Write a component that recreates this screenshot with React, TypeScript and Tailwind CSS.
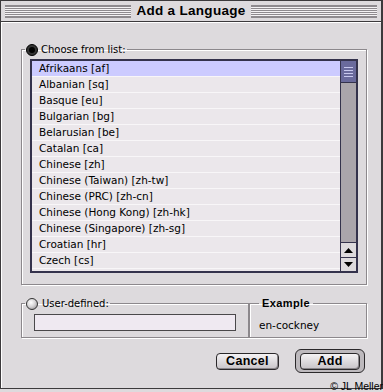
import React from 'react';

const languages = [
    'Afrikaans [af]',
    'Albanian [sq]',
    'Basque [eu]',
    'Bulgarian [bg]',
    'Belarusian [be]',
    'Catalan [ca]',
    'Chinese [zh]',
    'Chinese (Taiwan) [zh-tw]',
    'Chinese (PRC) [zh-cn]',
    'Chinese (Hong Kong) [zh-hk]',
    'Chinese (Singapore) [zh-sg]',
    'Croatian [hr]',
    'Czech [cs]',
];

const Stripes: React.FC = () => (
    <div className="flex-1 h-[13px] bg-[repeating-linear-gradient(to_bottom,#8e8a8e_0px,#8e8a8e_1px,#f4f2f4_1px,#f4f2f4_2px)] border-y border-[#8e8a8e]" />
);

const Radio: React.FC<{ checked: boolean }> = ({ checked }) =>
    checked ? (
        <span className="w-[12px] h-[12px] rounded-full bg-[#333] border border-black flex items-center justify-center">
            <span className="w-[6px] h-[6px] rounded-full bg-black" />
        </span>
    ) : (
        <span className="w-[12px] h-[12px] rounded-full border border-[#333] bg-[radial-gradient(circle_at_40%_35%,#ffffff_0%,#d8d6d8_45%,#8a868a_100%)]" />
    );

const App: React.FC = () => {
    return (
        <div className="relative w-[383px] h-[392px] bg-[#dddadd] font-['DejaVu_Sans',sans-serif] text-black">
            <div className="w-[383px] h-[389px] border border-[#3c3a3c] border-r-2 flex flex-col">
                {/* title bar */}
                <div className="h-[21px] flex items-center gap-[5px] px-[4px] bg-[#dddadd] border-b border-[#3c3a3c]">
                    <Stripes />
                    <span className="text-[13.5px] font-bold leading-none font-['Liberation_Sans',sans-serif] tracking-[0.3px]">Add a Language</span>
                    <Stripes />
                </div>

                <div className="flex-1 border-t border-white border-l bg-[#dddadd] pl-[19px] pt-[20px]">
                    {/* list group */}
                    <fieldset className="w-[346px] h-[242px] border border-[#8c888c] shadow-[inset_1px_1px_0_#fff,1px_1px_0_#fff] pt-[3px]">
                        <legend className="ml-[3px] px-[1px] flex items-center gap-[3px]">
                            <Radio checked />
                            <span className="text-[10px] leading-[13px]">Choose from list:</span>
                        </legend>
                        <div className="ml-[8px] w-[328px] h-[214px] border-2 border-[#34324c] flex bg-[#ebe7eb]">
                            <div className="flex-1 flex flex-col">
                                {languages.map((lang, i) => (
                                    <div
                                        key={lang}
                                        className={`h-[16px] flex items-center pl-[7px] text-[10.5px] border-b border-[#f8f6f8] ${i === 0 ? 'bg-[#cccbff]' : 'bg-[#ebe7eb]'}`}
                                    >
                                        {lang}
                                    </div>
                                ))}
                            </div>
                            {/* scrollbar */}
                            <div className="w-[16px] flex flex-col border-l border-[#34324c] bg-[#aaa5ab]">
                                <div className="h-[22px] bg-[#6a6a9c] border-b border-[#34324c] flex flex-col items-center justify-center gap-[2px]">
                                    <span className="w-[9px] h-[1px] bg-[#c8c8ee]" />
                                    <span className="w-[9px] h-[1px] bg-[#c8c8ee]" />
                                    <span className="w-[9px] h-[1px] bg-[#c8c8ee]" />
                                    <span className="w-[9px] h-[1px] bg-[#c8c8ee]" />
                                </div>
                                <div className="flex-1" />
                                <div className="h-[15px] border-t border-[#34324c] bg-[#dddadd] flex items-center justify-center">
                                    <svg width="9" height="5" viewBox="0 0 9 5"><path d="M4.5 0 L9 5 L0 5 Z" fill="#000" /></svg>
                                </div>
                                <div className="h-[14px] border-t border-[#34324c] bg-[#dddadd] flex items-center justify-center">
                                    <svg width="9" height="5" viewBox="0 0 9 5"><path d="M0 0 L9 0 L4.5 5 Z" fill="#000" /></svg>
                                </div>
                            </div>
                        </div>
                    </fieldset>

                    {/* user defined + example */}
                    <div className="flex mt-[12px]">
                        <fieldset className="w-[228px] h-[41px] border border-[#8c888c] shadow-[inset_1px_1px_0_#fff,1px_1px_0_#fff] pt-[4px]">
                            <legend className="ml-[3px] px-[1px] flex items-center gap-[4px]">
                                <Radio checked={false} />
                                <span className="text-[10px] leading-[13px]">User-defined:</span>
                            </legend>
                            <div className="ml-[12px] w-[202px] h-[17px] border border-[#4a484a] bg-[#efe9f1]" />
                        </fieldset>
                        <fieldset className="w-[118px] h-[41px] border border-[#8c888c] shadow-[inset_1px_1px_0_#fff,1px_1px_0_#fff] pt-[2px]">
                            <legend className="ml-[9px] px-[3px] text-[11px] font-bold leading-[13px] font-['Liberation_Sans',sans-serif] tracking-[0.4px]">Example</legend>
                            <span className="ml-[9px] text-[10.5px]">en-cockney</span>
                        </fieldset>
                    </div>

                    {/* buttons */}
                    <div className="flex justify-end items-center gap-[16px] mt-[11px] pr-[16px]">
                        <button className="w-[63px] h-[17px] rounded-[4px] border border-[#2a282a] bg-[linear-gradient(to_bottom,#f4f2f4,#c8c4c8)] shadow-[inset_-1px_-1px_0_#8a868a] text-[12.5px] font-bold leading-none font-['Liberation_Sans',sans-serif] tracking-[0.3px]">
                            Cancel
                        </button>
                        <div className="w-[70px] h-[24px] rounded-[6px] border border-[#2a282a] bg-[#bdb9bd] flex items-center justify-center">
                            <button className="w-[60px] h-[17px] rounded-[4px] border border-[#2a282a] bg-[linear-gradient(to_bottom,#f4f2f4,#c8c4c8)] shadow-[inset_-1px_-1px_0_#8a868a] text-[12.5px] font-bold leading-none font-['Liberation_Sans',sans-serif] tracking-[0.3px]">
                                Add
                            </button>
                        </div>
                    </div>
                </div>
            </div>
            <span className="absolute right-0 bottom-0 text-[10.5px] leading-[12px] font-['Liberation_Sans',sans-serif] text-black">© JL Meller</span>
        </div>
    );
};

export default App;
